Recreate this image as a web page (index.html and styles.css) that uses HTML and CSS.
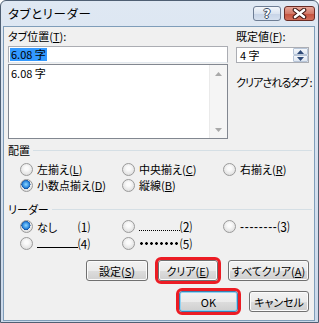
FILE: index.html
```html
<html>
<head>
<meta charset="utf-8">
<title>タブとリーダー</title>
<link rel="stylesheet" href="styles.css">
</head>
<body>
<div class="window">
  <div class="titlebar">
    <span class="title">タブとリーダー</span>
    <div class="caption">
      <span class="cap-btn help">?</span>
      <span class="cap-btn close">
        <svg width="17" height="11" viewBox="0 0 17 11">
          <path d="M4 2 L13 9 M13 2 L4 9" stroke="#3c1410" stroke-width="4.6" stroke-linecap="round" fill="none"/>
          <path d="M4 2 L13 9 M13 2 L4 9" stroke="#fff" stroke-width="2.6" stroke-linecap="round" fill="none"/>
        </svg>
      </span>
    </div>
  </div>

  <div class="client">
    <div class="top">
      <div class="tabcol">
        <div class="label">タブ位置(<u>T</u>):</div>
        <div class="edit"><span class="sel">6.08 字</span></div>
        <div class="listbox">
          <div class="items"><div class="item">6.08 字</div></div>
          <div class="vscroll">
            <span class="sbtn"><svg width="7" height="4" viewBox="0 0 7 4"><path d="M0 4 L3.5 0 L7 4 Z" fill="#a9a9a9"/></svg></span>
            <span class="sbtn"><svg width="7" height="4" viewBox="0 0 7 4"><path d="M0 0 L3.5 4 L7 0 Z" fill="#a9a9a9"/></svg></span>
          </div>
        </div>
      </div>
      <div class="defcol">
        <div class="label">既定値(<u>F</u>):</div>
        <div class="spin">
          <span class="spin-text">4 字</span>
          <div class="spin-btns">
            <span class="spin-btn"><svg width="7" height="4" viewBox="0 0 7 4"><path d="M0 4 L3.5 0 L7 4 Z" fill="#2e4a78"/></svg></span>
            <span class="spin-btn"><svg width="7" height="4" viewBox="0 0 7 4"><path d="M0 0 L3.5 4 L7 0 Z" fill="#2e4a78"/></svg></span>
          </div>
        </div>
        <div class="clear-label">クリアされるタブ :</div>
      </div>
    </div>

    <div class="group-head"><span>配置</span></div>
    <div class="radios">
      <label class="radio"><span class="dot"></span>左揃え(<u>L</u>)</label>
      <label class="radio"><span class="dot"></span>中央揃え(<u>C</u>)</label>
      <label class="radio"><span class="dot"></span>右揃え(<u>R</u>)</label>
      <label class="radio"><span class="dot on"></span>小数点揃え(<u>D</u>)</label>
      <label class="radio"><span class="dot"></span>縦線(<u>B</u>)</label>
    </div>

    <div class="group-head leader-head"><span>リーダー</span></div>
    <div class="radios leaders">
      <label class="radio"><span class="dot on"></span>なし<span class="num gap-none">⑴</span></label>
      <label class="radio"><span class="dot"></span><span class="fill dots"></span><span class="num">⑵</span></label>
      <label class="radio"><span class="dot"></span><span class="dashes">--------</span><span class="num">⑶</span></label>
      <label class="radio"><span class="dot"></span><span class="fill line"></span><span class="num">⑷</span></label>
      <label class="radio"><span class="dot"></span><span class="fill bullets"></span><span class="num">⑸</span></label>
    </div>

    <div class="buttons">
      <span class="btn w62">設定(<u>S</u>)</span>
      <span class="btn w60 marked">クリア(<u>E</u>)</span>
      <span class="btn w81">すべてクリア(<u>A</u>)</span>
    </div>
    <div class="buttons second">
      <span class="btn w59 default marked">OK</span>
      <span class="btn w60">キャンセル</span>
    </div>
  </div>
</div>
</body>
</html>
```

FILE: styles.css
```css
body {
  margin: 0;
  background: #fff;
  font-family: "Noto Sans CJK JP", "Liberation Sans", sans-serif;
  font-size: 11px;
  font-feature-settings: "palt";
  color: #000;
}
u { text-decoration: underline; text-underline-offset: 1px; }

/* window frame */
.window {
  box-sizing: border-box;
  width: 319px; height: 323px;
  border: 1px solid #4f5f73;
  border-radius: 6px 6px 0 0;
  background: linear-gradient(#dfe8f3, #cbd9ea);
  padding: 0 3px 1px 2px;
  display: flex; flex-direction: column;
}
.titlebar {
  height: 25px;
  display: flex;
  padding-left: 5px;
}
.title { line-height: 26px; font-size: 12.5px; letter-spacing: 0.6px; }
.caption { margin-left: auto; margin-top: 5px; display: flex; gap: 3px; height: 15px; }
.cap-btn {
  box-sizing: border-box; height: 15px;
  border-radius: 3px;
  display: flex; align-items: center; justify-content: center;
}
.help {
  width: 28px;
  border: 1px solid #6d7d94;
  background: linear-gradient(#f3f6fb, #dbe4f0 50%, #c6d3e6 51%, #d5e0ef);
  color: #fff; font-weight: bold; font-size: 12px; font-family: "DejaVu Sans", sans-serif;
  text-shadow: 1px 0 #3b4a60, -1px 0 #3b4a60, 0 1px #3b4a60, 0 -1px #3b4a60;
}
.close {
  width: 31px;
  border: 1px solid #6a2c25;
  background: linear-gradient(#e7a597, #d27a69 50%, #c4503c 51%, #d2705c);
}

.client {
  flex: 1;
  border: 1px solid #7f9db9;
  background: #f0f0f0;
  padding: 2px 0 0 4px;
}

/* top part: tab stop list and default */
.top { display: flex; }
.tabcol { width: 220px; }
.defcol { width: 73px; margin-left: 8px; }
.label { line-height: 14px; height: 14px; }
.edit {
  box-sizing: border-box; height: 17px; margin-top: 3px;
  border: 1px solid #abadb3; border-bottom-color: #e3e9ef;
  background: #fff;
  display: flex; align-items: center; padding-left: 1px;
}
.sel { background: #3399ff; line-height: 12px; padding: 0 1px 1px; }
.listbox {
  box-sizing: border-box; height: 75px; margin-top: 1px;
  border: 1px solid #828790; background: #fff;
  display: flex;
}
.items { flex: 1; padding: 1px 0 0 2px; }
.item { line-height: 14px; }
.vscroll {
  width: 17px; background: #f5f5f5; border-left: 1px solid #eaeaea;
  display: flex; flex-direction: column; justify-content: space-between;
}
.sbtn { height: 17px; display: flex; align-items: center; justify-content: center; }

.spin {
  box-sizing: border-box; height: 16px; margin-top: 4px;
  border: 1px solid #abadb3; background: #fff;
  display: flex;
}
.spin-text { flex: 1; padding-left: 3px; line-height: 14px; }
.spin-btns { width: 15px; display: flex; flex-direction: column; }
.spin-btn {
  flex: 1; display: flex; align-items: center; justify-content: center;
  border: 1px solid #b7c5d8; border-radius: 1px;
  background: linear-gradient(#f4f7fb, #dfe7f2);
}
.clear-label { margin-top: 12px; line-height: 14px; white-space: nowrap; letter-spacing: -0.9px; }

/* group headings */
.group-head {
  display: flex; align-items: center;
  line-height: 14px; margin-top: 4px; margin-right: 2px;
}
.group-head::after {
  content: ""; flex: 1; height: 1px; background: #d5dfe5; margin-left: 3px;
}
.leader-head { margin-top: 9px; }

/* radio buttons */
.radios {
  display: grid;
  grid-template-columns: 102px 101px auto;
  grid-auto-rows: 16px;
  margin-top: 4px; padding-left: 12px;
}
.leaders { grid-auto-rows: 17px; margin-top: 2px; }
.radio { display: flex; align-items: center; white-space: nowrap; }
.dot {
  box-sizing: border-box; width: 13px; height: 13px; margin-right: 4px;
  border-radius: 50%; border: 1px solid #9a9a9a;
  background: radial-gradient(circle at 50% 40%, #fbfbfb 20%, #dedede 80%);
}
.dot.on {
  background:
    radial-gradient(circle at 45% 40%, #8fd8ff 0, #2f8ae0 35%, #114e9c 50%, transparent 52%),
    radial-gradient(circle at 50% 40%, #fbfbfb 20%, #dedede 80%);
}
.num { font-family: "Noto Sans CJK JP", sans-serif; font-size: 12px; }
.gap-none { margin-left: 21px; }
.fill { display: inline-block; width: 41px; }
.dots { height: 10px; border-bottom: 1px dotted #000; margin-top: -2px; }
.line { height: 10px; border-bottom: 1px solid #000; margin-top: -2px; }
.bullets {
  height: 3px;
  background: radial-gradient(circle, #000 1.1px, transparent 1.6px) 0 0 / 5px 3px repeat-x;
}
.dashes { letter-spacing: 0.7px; font-family: "Liberation Sans", sans-serif; font-size: 12px; }

/* command buttons */
.buttons {
  display: flex; justify-content: flex-end; gap: 10px;
  margin-top: 8px; padding-right: 5px;
}
.buttons.second { margin-top: 10px; gap: 11px; }
.btn {
  box-sizing: border-box; height: 21px;
  border: 1px solid #707070; border-radius: 3px;
  background: linear-gradient(#f2f2f2, #ebebeb 50%, #dddddd 51%, #cfcfcf);
  box-shadow: inset 0 0 0 1px #fbfbfb;
  display: flex; align-items: center; justify-content: center;
  white-space: nowrap;
}
.btn.default { border-color: #3c7fb1; box-shadow: inset 0 0 0 1px #8fd3f2; }
.marked { outline: 3px solid #ec1c24; }
.w59 { width: 59px; }
.w60 { width: 60px; }
.w62 { width: 62px; }
.w81 { width: 81px; }
```
